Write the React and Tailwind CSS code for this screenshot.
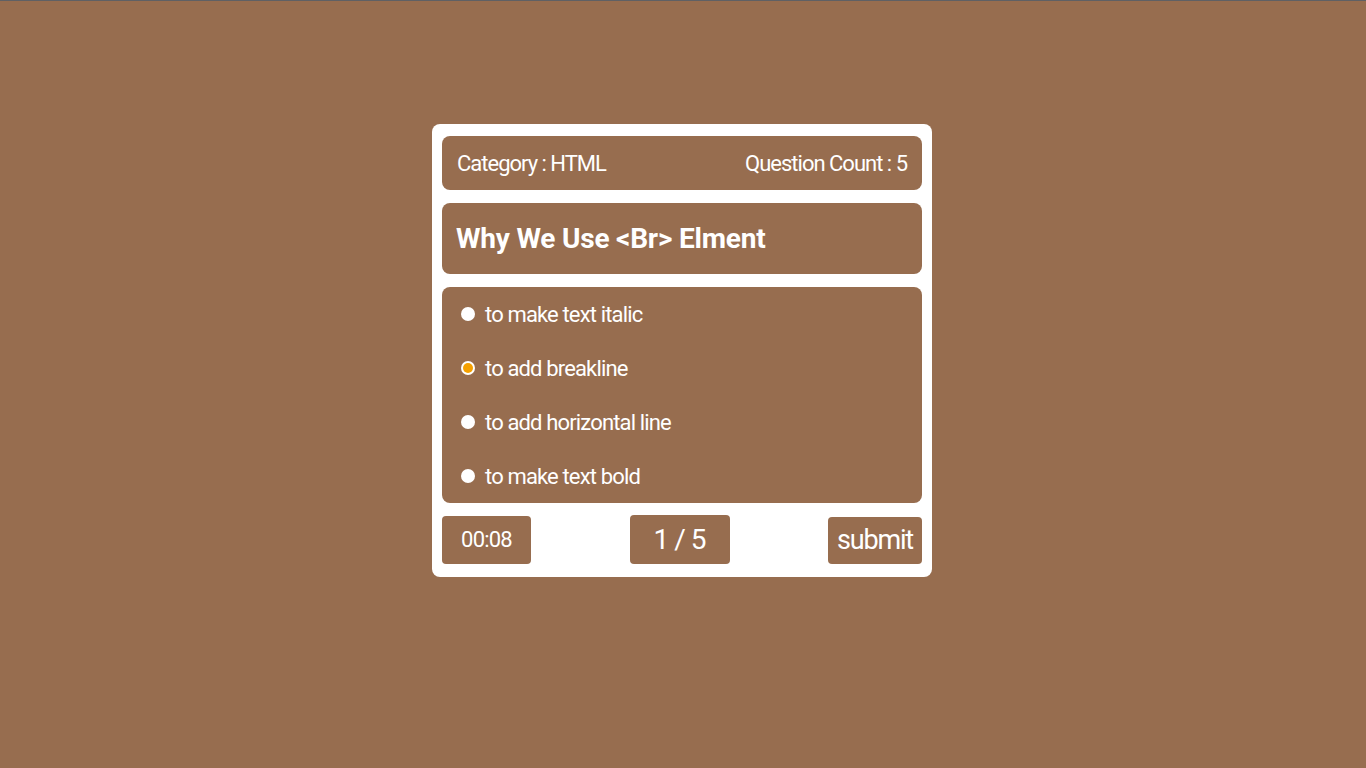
const options = [
  'to make text italic',
  'to add breakline',
  'to add horizontal line',
  'to make text bold',
]

export default function App() {
  const selected = 1

  return (
    <div
      className="min-h-screen bg-[#976d4f] border-t border-[#5f6064] pt-[123px] flex justify-center pr-[2px]"
      style={{ fontFamily: 'Roboto, "Liberation Sans", sans-serif' }}
    >
      <div className="w-[500px] h-fit bg-white rounded-lg pt-3 px-[10px] pb-[13px] flex flex-col gap-[13px]">
        <div className="h-[54px] bg-[#976d4f] rounded-lg px-[15px] flex items-center justify-between text-white text-[22px] tracking-[-1px]">
          <span>Category : HTML</span>
          <span>Question Count : 5</span>
        </div>

        <div className="h-[71px] bg-[#976d4f] rounded-lg px-[14px] flex items-center">
          <h2 className="text-white text-[28px] font-bold tracking-[-0.2px] leading-none">Why We Use &lt;Br&gt; Elment</h2>
        </div>

        <div className="bg-[#976d4f] rounded-lg pl-[19px]">
          {options.map((opt, i) => (
            <label key={opt} className="h-[54px] flex items-center gap-[10px] text-white text-[22px] tracking-[-0.85px] cursor-pointer">
              <span className="w-[14px] h-[14px] rounded-full bg-white flex items-center justify-center shrink-0">
                {i === selected && <span className="w-[10px] h-[10px] rounded-full bg-[#f5a000]" />}
              </span>
              {opt}
            </label>
          ))}
        </div>

        <div className="flex items-center justify-between -mt-px">
          <div className="w-[89px] h-[48px] bg-[#976d4f] rounded flex items-center justify-center text-white text-[22px] tracking-[-0.8px]">
            00:08
          </div>
          <div className="w-[100px] h-[49px] bg-[#976d4f] rounded flex items-center justify-center text-white text-[28px] tracking-[-1px]">
            1 / 5
          </div>
          <button className="w-[94px] h-[47px] bg-[#976d4f] rounded flex items-center justify-center text-white text-[27px] tracking-[-1.2px] mt-[2px]">
            submit
          </button>
        </div>
      </div>
    </div>
  )
}
